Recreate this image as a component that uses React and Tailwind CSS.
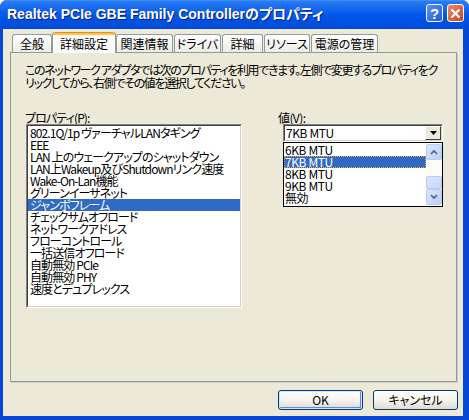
import React from 'react';

const TABS = [
  { label: '全般', w: 'w-[40px]' },
  { label: '詳細設定', w: 'w-[64px]', active: true },
  { label: '関連情報', w: 'w-[57px]' },
  { label: 'ドライバ', w: 'w-[47px] ml-[1px]' },
  { label: '詳細', w: 'w-[41px] ml-[1px]' },
  { label: 'リソース', w: 'w-[46px] ml-[1px]' },
  { label: '電源の管理', w: 'w-[67px] ml-[1px]' },
];

const PROPS = [
  '802.1Q/1p ヴァーチャルLANタギング',
  'EEE',
  'LAN 上のウェークアップのシャットダウン',
  'LAN上Wakeup及びShutdownリンク速度',
  'Wake-On-Lan機能',
  'グリーンイーサネット',
  'ジャンボフレーム',
  'チェックサムオフロード',
  'ネットワークアドレス',
  'フローコントロール',
  '一括送信オフロード',
  '自動無効 PCIe',
  '自動無効 PHY',
  '速度とデュプレックス',
];

const VALUES = ['6KB MTU', '7KB MTU', '8KB MTU', '9KB MTU', '無効'];

function TitleBar() {
  return (
    <div className="h-[29px] shrink-0 rounded-t-[7px] bg-gradient-to-b from-[#2A7BF5] via-[#0058E6] to-[#0149D9] border-t border-[#3D8DF7] flex items-center pl-[7px] pr-[5px]">
      <span className="flex-1 text-white font-bold text-[14px] leading-none whitespace-nowrap font-['Liberation_Sans','Noto_Sans_CJK_JP',sans-serif] [text-shadow:1px_1px_0_#0A1E8C] -mt-[3px]">
        Realtek PCIe GBE Family Controllerのプロパティ
      </span>
      <div className="flex gap-[4px] -mt-[4px]">
        <div className="w-[17px] h-[18px] rounded-[3px] border border-white bg-gradient-to-br from-[#5A92F7] to-[#1E59E0] flex items-center justify-center text-white font-bold text-[15px] leading-none font-['Liberation_Sans',sans-serif]">
          ?
        </div>
        <div className="w-[17px] h-[18px] rounded-[3px] border border-white bg-gradient-to-br from-[#E88C6C] to-[#C9401C] flex items-center justify-center">
          <svg width="11" height="11" viewBox="0 0 11 11">
            <path d="M1.5 1.5 L9.5 9.5 M9.5 1.5 L1.5 9.5" stroke="white" strokeWidth="2.2" />
          </svg>
        </div>
      </div>
    </div>
  );
}

function Tabs() {
  return (
    <div className="h-[23px] flex items-end pl-[9px] relative z-10">
      {TABS.map((t) =>
        t.active ? (
          <div
            key={t.label}
            className={`${t.w} h-[21px] -mb-[1px] rounded-t-[3px] border-x border-[#919B9C] bg-[#FCFCFE] flex flex-col`}
          >
            <div className="h-[3px] rounded-t-[3px] bg-[#FFC73C] border-t border-[#E68B2C]" />
            <div className="flex-1 flex items-center justify-center text-[12px] leading-none text-black">
              {t.label}
            </div>
          </div>
        ) : (
          <div
            key={t.label}
            className={`${t.w} h-[18px] rounded-t-[3px] border border-b-0 border-[#919B9C] bg-gradient-to-b from-white to-[#ECEBE6] flex items-center justify-center text-[12px] leading-none text-black`}
          >
            {t.label}
          </div>
        )
      )}
    </div>
  );
}

function ScrollArrow({ up }) {
  return (
    <div className="h-[16px] rounded-[2px] border border-[#B9CCF5] bg-gradient-to-br from-[#DDE8FE] to-[#B8CDF9] flex items-center justify-center">
      <svg width="8" height="6" viewBox="0 0 8 6">
        <path d={up ? 'M1 5 L4 2 L7 5' : 'M1 1 L4 4 L7 1'} stroke="#4D6185" strokeWidth="1.6" fill="none" />
      </svg>
    </div>
  );
}

function ValuePicker() {
  return (
    <div className="flex flex-col w-[160px] ml-[5px]">
      <div className="h-[18px] border border-t-[#808080] border-l-[#808080] border-r-white border-b-white flex">
        <div className="flex-1 bg-white border border-t-[#404040] border-l-[#404040] border-r-[#D4D0C8] border-b-[#D4D0C8] flex items-center pl-[1px]">
          <span className="text-[12px] leading-none tracking-[-0.4px]">7KB MTU</span>
          <div className="ml-auto w-[16px] h-full bg-[#ECE9D8] border border-t-white border-l-white border-r-[#404040] border-b-[#404040] flex items-center justify-center">
            <svg width="7" height="4" viewBox="0 0 7 4">
              <path d="M0 0 H7 L3.5 4 Z" fill="black" />
            </svg>
          </div>
        </div>
      </div>
      <div className="h-[65px] border border-black bg-white flex">
        <div className="flex-1 pt-[1px]">
          {VALUES.map((v) => (
            <div
              key={v}
              className={`h-[12px] text-[12px] leading-[12px] pl-[1px] tracking-[-0.4px] ${
                v === '7KB MTU'
                  ? 'bg-[#316AC5] text-white outline outline-1 outline-dotted outline-[#E8A33A] -outline-offset-1'
                  : 'text-black'
              }`}
            >
              {v}
            </div>
          ))}
        </div>
        <div className="w-[16px] bg-[#FBFBF8] flex flex-col pt-[1px] pb-[1px]">
          <ScrollArrow up />
          <div className="flex-1 flex flex-col justify-end">
            <div className="h-[13px] rounded-[2px] border border-[#B9CCF5] bg-gradient-to-br from-[#DDE8FE] to-[#C3D5FB]" />
          </div>
          <ScrollArrow />
        </div>
      </div>
    </div>
  );
}

function XpButton({ children, primary }) {
  return (
    <div
      className={`w-[85px] h-[20px] rounded-[3px] border border-[#003C74] bg-gradient-to-b from-white via-[#F5F4EF] to-[#DEDBD0] flex items-center justify-center text-[12px] leading-none text-black ${
        primary ? 'shadow-[inset_0_0_0_1px_#CEE7FF,inset_-1px_-1px_0_1px_#6982EE]' : ''
      }`}
    >
      {children}
    </div>
  );
}

export default function App() {
  return (
    <div className="w-[469px] h-[420px] bg-white font-['Noto_Sans_CJK_JP',sans-serif] [font-feature-settings:'palt'] text-black">
      <div className="w-[469px] h-[420px] flex flex-col rounded-t-[7px] bg-[#0846D8]">
        <TitleBar />
        <div className="flex-1 flex flex-col bg-[#ECE9D8] ml-[3px] mr-[6px] mb-[4px]">
          <Tabs />
          <div className="ml-[7px] w-[447px] h-[330px] border border-[#919B9C] shadow-[1px_1px_0_#D0CDBF] bg-[#ECE9D8] pt-[10px] pl-[14px]">
            <p className="text-[12px] leading-[13px] tracking-[-1.35px] whitespace-nowrap">
              このネットワーク アダプタでは次のプロパティを利用できます。左側で変更するプロパティをク
              <br />
              リックしてから、右側でその値を選択してください。
            </p>
            <div className="flex mt-[22px]">
              <div className="flex flex-col w-[217px]">
                <span className="text-[12px] leading-[13px] h-[13px] tracking-[-0.9px]">
                  プロパティ(<u>P</u>):
                </span>
                <div className="ml-[1px] h-[184px] border border-t-[#808080] border-l-[#808080] border-r-white border-b-white">
                  <div className="h-full bg-white border border-t-[#404040] border-l-[#404040] border-r-[#D4D0C8] border-b-[#D4D0C8] pt-[1px]">
                    {PROPS.map((p) => (
                      <div
                        key={p}
                        className={`h-[12px] text-[12px] leading-[12px] pl-[2px] tracking-[-0.9px] whitespace-nowrap ${
                          p === 'ジャンボフレーム' ? 'bg-[#316AC5] text-white' : ''
                        }`}
                      >
                        {p}
                      </div>
                    ))}
                  </div>
                </div>
              </div>
              <div className="flex flex-col ml-[36px]">
                <span className="text-[12px] leading-[13px] h-[13px] tracking-[-0.6px]">
                  値(<u>V</u>):
                </span>
                <ValuePicker />
              </div>
            </div>
          </div>
          <div className="flex justify-end gap-[10px] pr-[5px] mt-[8px]">
            <XpButton primary>OK</XpButton>
            <XpButton>キャンセル</XpButton>
          </div>
        </div>
      </div>
    </div>
  );
}
